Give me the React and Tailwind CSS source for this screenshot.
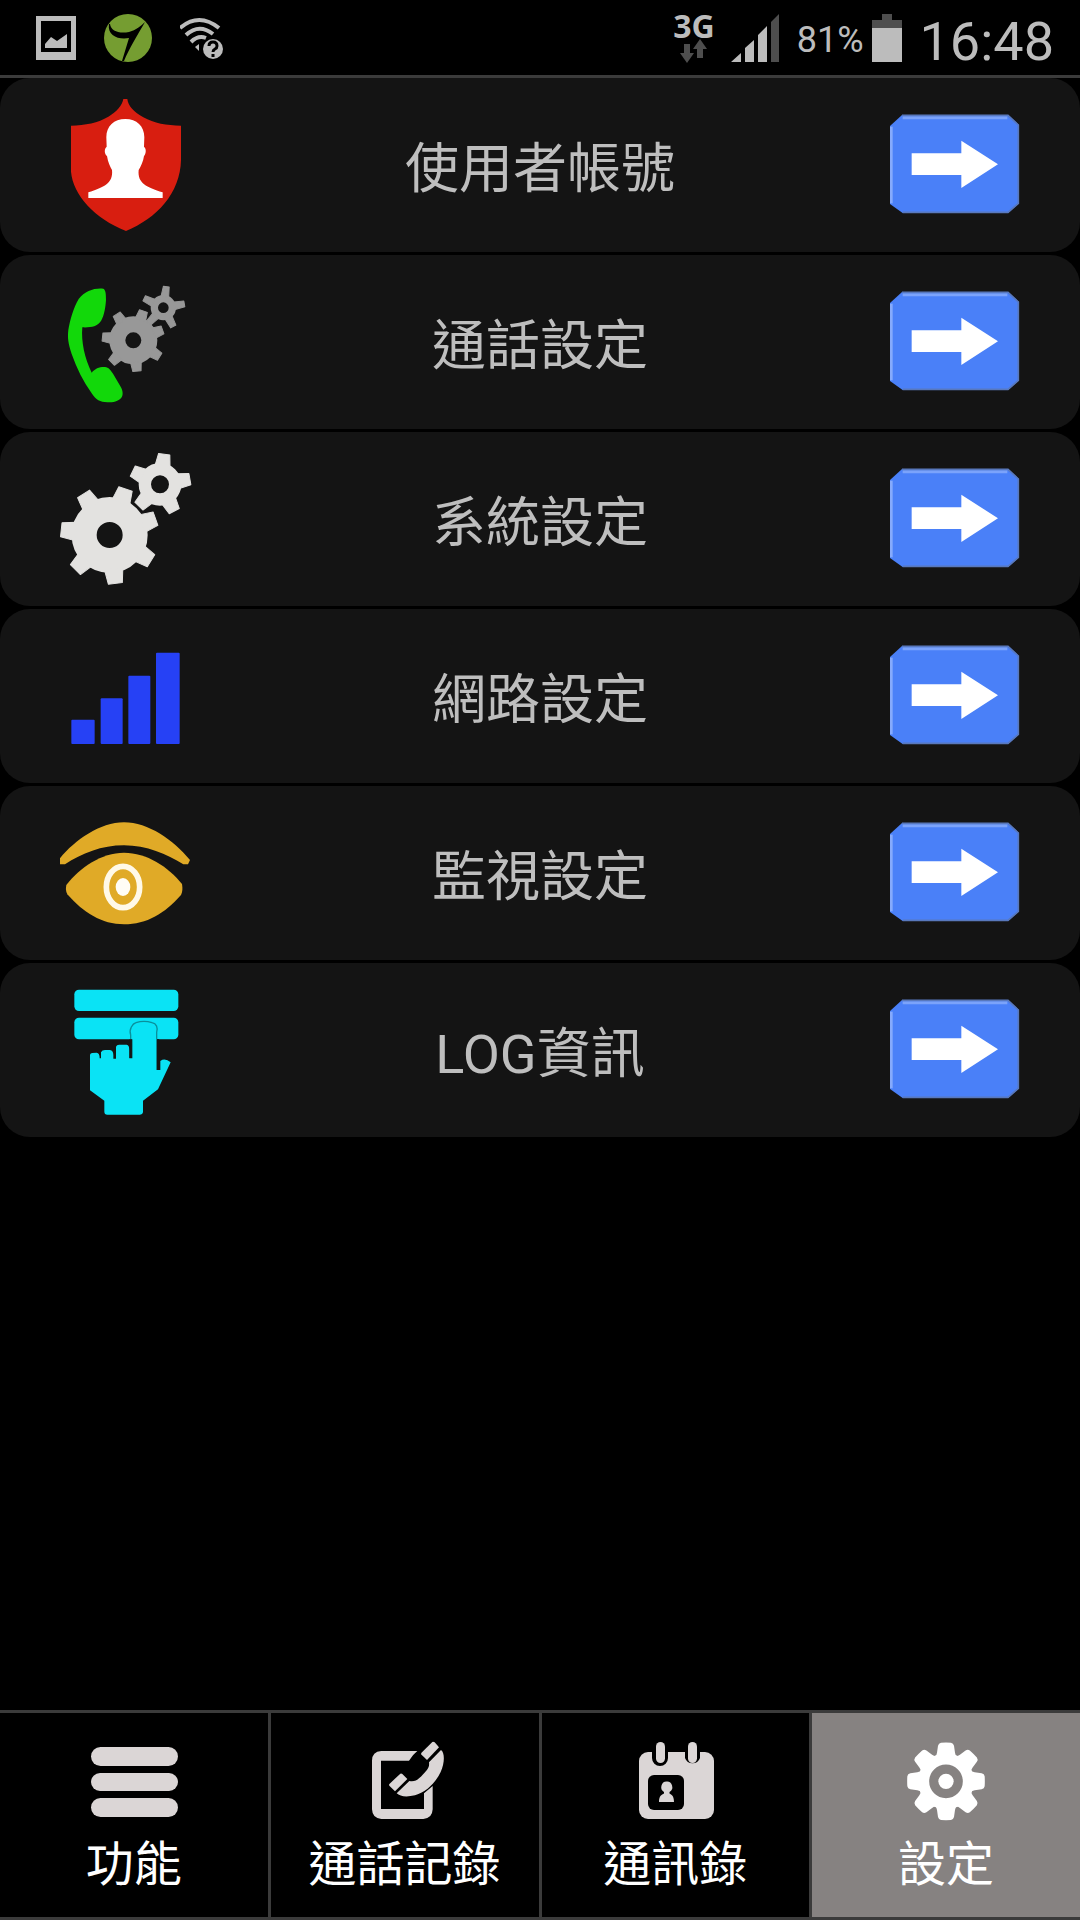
const TEXT_FONT = "font-[Roboto,'Noto_Sans_CJK_TC',sans-serif]";

function Gear({ cx, cy, body, hole, outer, tooth, count, start }) {
  const teeth = Array.from({ length: count }, (_, i) => start + (i * 360) / count);
  const base = tooth * 0.6;
  const tip = tooth * 0.46;
  return (
    <g>
      <circle
        cx={cx}
        cy={cy}
        r={(body + hole) / 2}
        fill="none"
        stroke="currentColor"
        strokeWidth={body - hole}
      />
      {teeth.map((angle) => (
        <path
          key={angle}
          transform={`translate(${cx} ${cy}) rotate(${angle})`}
          d={`M${-base} ${-body * 0.9}L${-tip} ${-outer}H${tip}L${base} ${-body * 0.9}Z`}
          fill="currentColor"
          stroke="currentColor"
          strokeWidth="3"
          strokeLinejoin="round"
        />
      ))}
    </g>
  );
}

function ShieldIcon() {
  return (
    <svg viewBox="180 297 390 390" className="size-[130px] overflow-visible" aria-hidden="true">
      <path
        fill="#d81e10"
        d="M370 297H382C384 318 402 336 430 352C462 370 500 377 543 377V480C541 580 470 655 378 693C284 655 219 585 213 515V377C255 376 295 368 325 350C350 335 366 318 370 297Z"
      />
      <path
        fill="#fff"
        d="M376 357C410 357 433 378 433 412L432 440C440 446 438 462 432 468C430 485 422 500 416 510C412 550 440 562 488 577V594H265V577C312 562 340 550 336 510C330 500 324 487 321 468C313 462 312 446 320 440L319 412C319 378 342 357 376 357Z"
      />
    </svg>
  );
}

function CallSettingsIcon() {
  return (
    <svg viewBox="180 78 390 390" className="size-[130px] text-[#989898]" aria-hidden="true">
      <path
        fill="#12d80a"
        d="M310 116C317 120 318 130 318 150C316 180 310 205 300 217C290 229 275 233 247 232C243 275 254 325 275 368C285 355 300 350 315 351C326 352 332 360 340 373L362 410C369 422 370 435 364 443C355 454 340 457 322 457C300 456 288 450 275 430C250 395 230 355 215 312C205 280 202 265 205 240C210 210 220 175 236 147C255 122 285 113 310 116Z"
      />
      <Gear cx={400} cy={271} body={72} hole={24} outer={93} tooth={27} count={7} start={19} />
      <Gear cx={490} cy={173} body={38} hole={16} outer={64} tooth={19} count={5} start={8} />
    </svg>
  );
}

function SystemIcon() {
  return (
    <svg viewBox="180 609 390 390" className="size-[130px] overflow-visible text-[#e3e2e0]" aria-hidden="true">
      <Gear cx={329} cy={855} body={114} hole={39} outer={146} tooth={46} count={7} start={19} />
      <Gear cx={480} cy={703} body={64} hole={27} outer={91} tooth={37} count={5} start={8} />
    </svg>
  );
}

function SignalIcon() {
  return (
    <svg viewBox="180 60 390 390" className="size-[130px]" fill="#2641f5" aria-hidden="true">
      <rect x="214" y="329" width="70" height="73" rx="3" />
      <rect x="302" y="265" width="66" height="137" rx="3" />
      <rect x="385" y="197" width="66" height="205" rx="3" />
      <rect x="468" y="128" width="71" height="274" rx="3" />
    </svg>
  );
}

function EyeIcon() {
  return (
    <svg viewBox="180 591 390 390" className="size-[130px]" aria-hidden="true">
      <path
        fill="#e0aa27"
        d="M180 745C225 690 300 637 372 637C445 637 520 690 570 750L564 763H550C500 732 440 706 372 706C305 706 245 730 195 763H180Z"
      />
      <path
        fill="#e0aa27"
        d="M199 825C240 772 305 728 372 728C440 728 505 770 546 822C548 835 548 845 543 855C495 910 440 943 372 943C305 943 250 908 202 853C197 843 197 835 199 825Z"
      />
      <ellipse cx="369" cy="831" rx="50" ry="62" fill="none" stroke="#fff9e8" strokeWidth="17" />
      <ellipse cx="369" cy="831" rx="22" ry="27" fill="#fffdf5" />
    </svg>
  );
}

function TouchIcon() {
  return (
    <svg viewBox="180 87 390 390" className="size-[130px] overflow-visible" aria-hidden="true">
      <g fill="#0ae3f5">
        <rect x="223" y="104" width="312" height="64" rx="14" />
        <rect x="223" y="188" width="312" height="65" rx="14" />
        <path d="M270 300Q270 295 276 294L290 293Q299 294 299 310H303V292Q306 285 315 285H330Q340 286 340 300V311H348V275Q350 269 357 269H380Q388 270 388 285V310H397V240Q393 200 432 199Q474 200 470 240V345H481V318Q495 308 512 322L474 403L429 437V472Q428 479 420 479H322Q313 479 313 470V437L270 406Z" />
      </g>
      <path
        d="M392 308V240C386 222 398 206 408 203Q432 195 456 203C470 206 474 218 470 232V253"
        fill="none"
        stroke="#0a8f9b"
        strokeWidth="4"
      />
      <path d="M392 253V309M474 253V345" stroke="#141414" strokeWidth="7" fill="none" />
    </svg>
  );
}

function ArrowIcon() {
  return (
    <svg viewBox="90 27 390 390" className="size-[130px]" aria-hidden="true">
      <path fill="#4a80f8" d="M126 75H444L477 105V340L444 369H128L90 342V108Z" />
      <path fill="none" stroke="#7ba3fb" strokeWidth="9" d="M128 83H442" />
      <path fill="none" stroke="#86aafc" strokeWidth="8" d="M94 110V340" />
      <path fill="none" stroke="#5878bd" strokeWidth="5" d="M126 76H444L475 105V340L444 367H128" />
      <path fill="#fff" d="M155 190H304V152L414 223L304 294V255H155Z" />
    </svg>
  );
}

function MenuIcon() {
  return (
    <svg viewBox="0 0 88 80" className="h-[80px] w-[88px]" fill="#dbd6d6" aria-hidden="true">
      <rect x="1" y="6" width="87" height="19" rx="9.5" />
      <rect x="1" y="32" width="87" height="18" rx="9" />
      <rect x="1" y="57" width="87" height="19" rx="9.5" />
    </svg>
  );
}

function CallLogIcon() {
  return (
    <svg viewBox="63 63 264 240" className="h-[80px] w-[88px]" fill="#dbd6d6" aria-hidden="true">
      <path d="M232 93H124Q96 95 96 122V268Q97 295 124 297H250Q277 295 278 268V198L252 220V267H123V122H207Q217 105 232 93Z" />
      <path d="M277 66Q280 64 284 67L297 82L261 120L243 103Q243 100 246 97Z" />
      <path d="M181 161Q184 159 187 162L202 177L165 214L148 197Q146 193 149 191Z" />
      <path d="M303 90C315 98 314 130 302 156C285 190 260 215 225 226C200 232 180 230 170 220L208 183C225 187 235 178 248 164C262 150 269 143 267 127Z" />
    </svg>
  );
}

function ContactsIcon() {
  return (
    <svg viewBox="0 0 88 80" className="h-[80px] w-[88px]" aria-hidden="true">
      <rect x="8" y="11" width="75" height="67" rx="9" fill="#dbd6d6" />
      <path d="M21 8V17a8 8 0 0 0 16 0V8ZM54 8V17a8 8 0 0 0 15 0V8Z" fill="#000" />
      <rect x="25" y="1" width="9" height="21" rx="4.5" fill="#dbd6d6" />
      <rect x="57" y="1" width="9" height="21" rx="4.5" fill="#dbd6d6" />
      <rect x="17" y="34" width="36" height="35" rx="6" fill="#000" />
      <path
        d="M35.500 40.500a5.300 5.600 0 0 1 3 10.500v1.500C42 54 43 57 43 61H28C28 57 29 54 33 52.500V51a5.300 5.600 0 0 1 2.500-10.500Z"
        fill="#dbd6d6"
      />
    </svg>
  );
}

function SettingsIcon() {
  return (
    <svg viewBox="69 123 264 240" className="h-[80px] w-[88px]" fill="#fff" aria-hidden="true">
      <circle cx="201" cy="244" r="67" fill="none" stroke="#fff" strokeWidth="33" />
      {[0, 45, 90, 135, 180, 225, 270, 315].map((angle) => (
        <path
          key={angle}
          transform={`translate(201 244) rotate(${angle})`}
          d="M-33 -74Q-28 -78 -27 -86L-24 -107Q-22 -115 -15 -116Q0 -117 15 -116Q22 -115 24 -107L27 -86Q28 -78 33 -74Z"
        />
      ))}
      <circle cx="201" cy="244" r="23" />
    </svg>
  );
}

function StatusBar() {
  return (
    <header className="flex h-[78px] items-center justify-between border-b-3 border-[#3b3b3b] pr-[26px] pl-9 text-[#bcbcbc]">
      <div className="flex items-center gap-7">
        <svg viewBox="0 0 40 44" className="h-[44px] w-[40px]" fill="currentColor" aria-hidden="true">
          <path fillRule="evenodd" d="M0 0H40V44H0ZM5 5V36H35V5Z" />
          <path d="M9 32V28L15 21L21 25L31 18V32Z" />
        </svg>
        <svg viewBox="0 0 48 48" className="size-12" aria-hidden="true">
          <circle cx="24" cy="24" r="24" fill="#759d31" />
          <path d="M6 10C7 17 15 20 25 18C32 16 37 12 41 8C34 20 25 35 20 47H18L25 24C15 26 3 22 5 10Z" fill="#000" />
        </svg>
        <svg viewBox="2 0 46 44" className="h-[44px] w-[46px]" fill="none" stroke="currentColor" strokeWidth="4" aria-hidden="true">
          <path d="M2 12Q21 -4 41 12M8 19Q21 7 35 18M13 26Q20 19 28 22" />
          <path d="M17 31L21 28V35Z" fill="currentColor" stroke="none" />
          <circle cx="35" cy="33" r="10" fill="currentColor" stroke="none" />
          <path d="M31 30Q31 26 35 26Q39 26 39 30Q39 32 37 33Q35 34 35 36M35 38V41" stroke="#000" strokeWidth="3" />
        </svg>
      </div>
      <div className="flex items-center">
        <div className="mr-4 flex flex-col items-center">
          <span className="font-['Open_Sans',sans-serif] text-[32px] leading-[26px] font-bold">3G</span>
          <svg viewBox="0 0 27 24" className="h-[24px] w-[27px]" fill="#4e4e4e" aria-hidden="true">
            <path d="M4 5H10V14H14L7 24L0 14H4ZM17 19V10H13L20 0L27 10H23V19Z" />
          </svg>
        </div>
        <svg viewBox="0 0 48 48" className="mr-[18px] size-12" fill="currentColor" aria-hidden="true">
          <path d="M0 48L10 39V48ZM14 48V34L23 26V48ZM27 48V21L36 12V48Z" />
          <path d="M40 48V8L48 0V48Z" fill="#4e4e4e" />
        </svg>
        <span className="pt-1 font-[Roboto,sans-serif] text-[36px] leading-none">81%</span>
        <svg viewBox="0 0 30 48" className="mx-2 h-12 w-[30px]" aria-hidden="true">
          <path d="M10 0H20V6H30V48H0V6H10Z" fill="#4e4e4e" />
          <path d="M0 14H30V48H0Z" fill="currentColor" />
        </svg>
        <time className="ml-[10px] pt-2 font-[Roboto,sans-serif] text-[54px] leading-none">16:48</time>
      </div>
    </header>
  );
}

const rows = [
  { label: "使用者帳號", Icon: ShieldIcon },
  { label: "通話設定", Icon: CallSettingsIcon },
  { label: "系統設定", Icon: SystemIcon },
  { label: "網路設定", Icon: SignalIcon },
  { label: "監視設定", Icon: EyeIcon },
  { label: "LOG資訊", Icon: TouchIcon },
];

const tabs = [
  { label: "功能", Icon: MenuIcon },
  { label: "通話記錄", Icon: CallLogIcon },
  { label: "通訊錄", Icon: ContactsIcon },
  { label: "設定", Icon: SettingsIcon, active: true },
];

export default function App() {
  return (
    <div className={`flex min-h-screen flex-col bg-black ${TEXT_FONT}`}>
      <StatusBar />
      <main className="flex-1">
        <ul className="flex flex-col gap-[3px]">
          {rows.map(({ label, Icon }) => (
            <li
              key={label}
              className="grid grid-cols-[130px_1fr_130px] items-center rounded-[30px] bg-[#141414] px-[60px] pt-[21px] pb-[23px]"
            >
              <Icon />
              <span className="pt-3 text-center text-[54px] leading-none text-[#bebebe]">{label}</span>
              <button type="button" aria-label={label}>
                <ArrowIcon />
              </button>
            </li>
          ))}
        </ul>
      </main>
      <nav className="grid grid-cols-4 gap-[3px] border-y-3 border-[#3b3b3b] bg-[#3b3b3b]">
        {tabs.map(({ label, Icon, active }) => (
          <button
            key={label}
            type="button"
            aria-current={active ? "page" : undefined}
            className={`flex flex-col items-center gap-5 pt-7 pb-7 text-white ${active ? "bg-[#868281]" : "bg-black"}`}
          >
            <Icon />
            <span className="text-[48px] leading-12">{label}</span>
          </button>
        ))}
      </nav>
    </div>
  );
}
